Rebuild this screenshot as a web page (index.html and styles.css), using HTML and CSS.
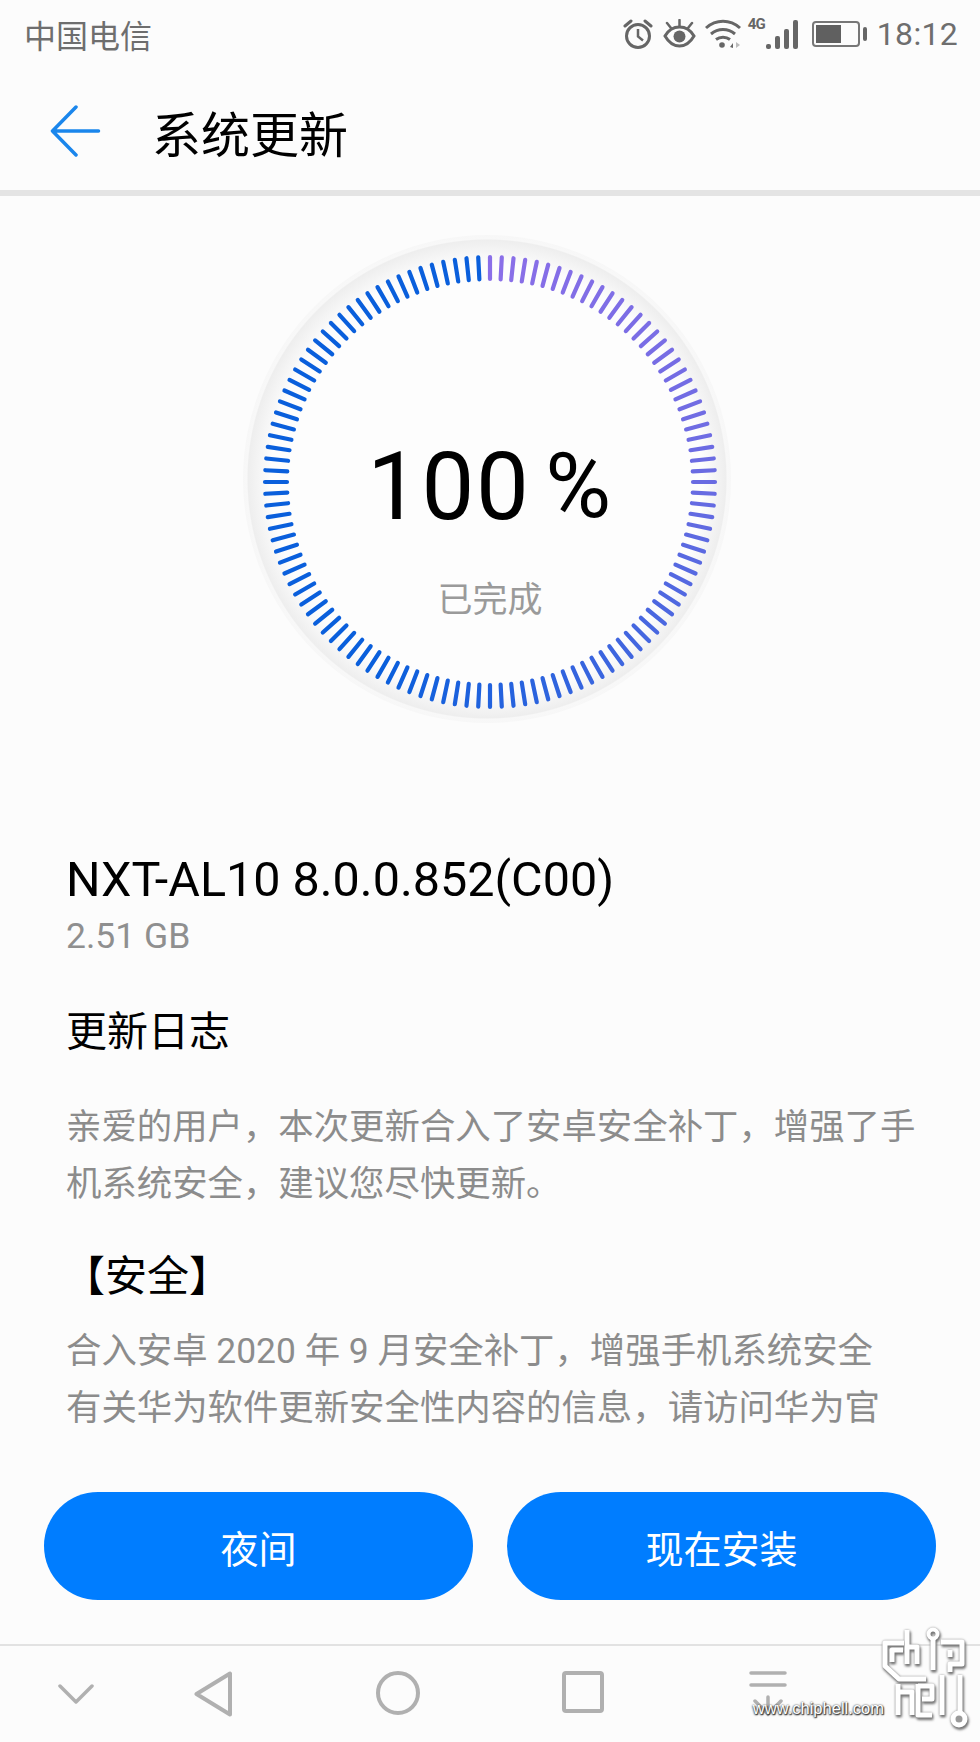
FILE: index.html
```html
<!DOCTYPE html>
<html lang="zh">
<head>
    <meta charset="utf-8">
    <title>系统更新</title>
    <link rel="stylesheet" href="styles.css">
</head>
<body>
    <div class="phone">
        <!-- Status bar -->
        <div class="status-bar">
            <span class="carrier">中国电信</span>
            <div class="status-icons">
                <svg class="ic-alarm" width="32" height="30" viewBox="0 0 32 30" fill="none" stroke="#666" stroke-width="3">
                    <circle cx="16" cy="17" r="11.500"/>
                    <path d="M16 10v7.500l5 4" stroke-width="2.500"/>
                    <path d="M3 7l6-5M29 7l-6-5" stroke-linecap="round"/>
                </svg>
                <svg class="ic-eye" width="33" height="30" viewBox="0 0 33 30" fill="none" stroke="#666" stroke-width="3">
                    <path d="M2 17c4-7 9-9 14.500-9s10.500 2 14.500 9c-4 7-9 10-14.500 10s-10.500-3-14.500-10z"/>
                    <circle cx="16.500" cy="17.500" r="6" fill="#666" stroke="none"/>
                    <path d="M16.500 7V1M8 9L4 4M25 9l4-5" stroke-width="2.500" stroke-linecap="round"/>
                </svg>
                <svg class="ic-wifi" width="36" height="30" viewBox="0 0 36 30" fill="none" stroke="#666" stroke-width="3">
                    <path d="M1 9c10-9 24-9 34 0M6 15c7-6 17-6 24 0M11 20.500c4-3 10-3 14 0"/>
                    <circle cx="17" cy="26" r="2.800" fill="#666" stroke="none"/>
                    <path d="M25 28l3-4v5z" fill="#666" stroke="none"/>
                    <path d="M31 23l4 3-4 3z" fill="#bbb" stroke="none"/>
                </svg>
                <div class="signal">
                    <span class="net">4G</span>
                    <div class="bars">
                        <i class="b1"></i><i class="b2"></i><i class="b3"></i><i class="b4"></i>
                    </div>
                </div>
                <div class="battery">
                    <div class="battery-body"><div class="battery-fill"></div></div>
                    <div class="battery-nub"></div>
                </div>
                <span class="time">18:12</span>
            </div>
        </div>

        <!-- Title bar -->
        <div class="title-bar">
            <svg class="back" width="52" height="52" viewBox="0 0 52 52" fill="none" stroke="#1a86ec" stroke-width="3.500" stroke-linecap="round" stroke-linejoin="round">
                <path d="M26 2L2.500 26 26 50M3 26h45.500"/>
            </svg>
            <h1>系统更新</h1>
        </div>

        <!-- Progress ring -->
        <div class="gauge-wrap">
            <div class="gauge">
                <svg id="ring" class="ring" width="500" height="500" viewBox="0 0 500 500">
                    <defs>
                        <radialGradient id="ringBg" gradientUnits="userSpaceOnUse" cx="247" cy="247" r="245">
                            <stop offset="0.88" stop-color="#fdfdfd"/>
                            <stop offset="0.975" stop-color="#eeeeee"/>
                            <stop offset="0.98" stop-color="#f8f8f8"/>
                            <stop offset="1" stop-color="#f7f7f7"/>
                        </radialGradient>
                    </defs>
                    <circle cx="247" cy="247" r="244" fill="url(#ringBg)"/>
                </svg>
                <div class="gauge-text">
                    <div class="percent">100<span class="pct-sign">%</span></div>
                    <div class="done">已完成</div>
                </div>
            </div>
        </div>

        <!-- Update info -->
        <div class="info">
            <div class="version">NXT-AL10 8.0.0.852(C00)</div>
            <div class="size">2.51 GB</div>
            <h2 class="log-title">更新日志</h2>
            <p class="log-text">亲爱的用户，本次更新合入了安卓安全补丁，增强了手机系统安全，建议您尽快更新。</p>
            <h2 class="sec-title">【安全】</h2>
            <p class="log-text sec-text">合入安卓 2020 年 9 月安全补丁，增强手机系统安全<br>有关华为软件更新安全性内容的信息，请访问华为官</p>
        </div>

        <!-- Buttons -->
        <div class="actions">
            <button class="btn">夜间</button>
            <button class="btn">现在安装</button>
        </div>

        <!-- Navigation bar -->
        <div class="nav-bar">
            <svg class="nav-hide" width="36" height="20" viewBox="0 0 36 20" fill="none" stroke="#b0b0b0" stroke-width="3.500" stroke-linecap="round" stroke-linejoin="round">
                <path d="M2 2l16 16L34 2"/>
            </svg>
            <div class="nav-keys">
                <div class="nav-key">
                    <svg width="38" height="46" viewBox="0 0 38 46" fill="none" stroke="#b0b0b0" stroke-width="4" stroke-linejoin="round">
                        <path d="M36 2.500v41L2.500 23z"/>
                    </svg>
                </div>
                <div class="nav-key">
                    <svg width="44" height="44" viewBox="0 0 44 44" fill="none" stroke="#b0b0b0" stroke-width="4">
                        <circle cx="22" cy="22" r="20"/>
                    </svg>
                </div>
                <div class="nav-key">
                    <svg width="42" height="42" viewBox="0 0 42 42" fill="none" stroke="#b0b0b0" stroke-width="4" stroke-linejoin="round">
                        <rect x="2" y="2" width="38" height="38" rx="2"/>
                    </svg>
                </div>
                <div class="nav-key">
                    <svg width="38" height="46" viewBox="0 0 38 46" fill="none" stroke="#b0b0b0" stroke-linecap="round">
                        <path d="M2 2h34M2 14h34M19 26v16M6 30l13 13 13-13" stroke-width="3.500"/>
                    </svg>
                </div>
            </div>
        </div>

        <!-- Forum watermark -->
        <div class="watermark">
            <span class="wm-text">www.chiphell.com</span>
            <svg class="wm-logo" width="110" height="122" viewBox="0 0 110 122" fill="none" stroke="#fff" stroke-width="5" stroke-linejoin="round">
                <path d="M34 23H15V46L29 59H56"/>
                <path d="M22 42V30H33"/>
                <path d="M37 10V44M37 27H47V44"/>
                <circle cx="63" cy="14" r="4.500" stroke-width="4"/>
                <path d="M63 18V50"/>
                <path d="M71 22H92V44H80V52M80 30V37"/>
                <path d="M28 64V95M28 72H42V95"/>
                <path d="M48 64V95H62M48 66H62V79H52"/>
                <path d="M72 55V95M90 55V92"/>
                <circle cx="89" cy="99" r="6" stroke-width="5" fill="#999"/>
            </svg>
        </div>
    </div>
    <script src="script.js"></script>
</body>
</html>
```

FILE: styles.css
```css
* { box-sizing: border-box; }
html, body { margin: 0; padding: 0; }
body {
    font-family: Roboto, "Noto Sans CJK SC", sans-serif;
    background-color: #fcfcfc;
    color: #000;
}
.phone {
    position: relative;
    width: 980px;
    height: 1742px;
    overflow: hidden;
    display: flex;
    flex-direction: column;
}

/* status bar */
.status-bar {
    height: 70px;
    padding: 0 22px 2px 24px;
    display: flex;
    align-items: center;
    justify-content: space-between;
    color: #6e6e6e;
}
.carrier { font-size: 32px; }
.status-icons { display: flex; align-items: center; }
.ic-alarm { margin-right: 9px; }
.ic-eye { margin-right: 9px; }
.ic-wifi { margin-right: 7px; }
.signal { position: relative; width: 50px; height: 30px; margin-right: 14px; }
.net {
    position: absolute;
    left: 0;
    top: -4px;
    font-size: 15px;
    font-weight: 700;
    letter-spacing: -1px;
    color: #666;
}
.bars {
    position: absolute;
    right: 0;
    bottom: 0;
    display: flex;
    align-items: flex-end;
    gap: 4px;
}
.bars i { display: block; width: 5px; background-color: #666; border-radius: 2px; }
.bars .b1 { height: 5px; }
.bars .b2 { height: 13px; }
.bars .b3 { height: 20px; }
.bars .b4 { height: 29px; }
.battery { display: flex; align-items: center; margin-right: 10px; }
.battery-body {
    width: 48px;
    height: 26px;
    border: 2px solid #777;
    border-radius: 4px;
    padding: 2px;
}
.battery-fill { width: 25px; height: 100%; background-color: #606060; }
.battery-nub { width: 4px; height: 14px; margin-left: 3px; background-color: #666; border-radius: 2px; }
.time { font-size: 32px; letter-spacing: 0.3px; }

/* title bar */
.title-bar {
    height: 126px;
    padding: 2px 0 0 50px;
    display: flex;
    align-items: center;
    border-bottom: 6px solid #e4e4e4;
}
.title-bar h1 {
    margin: 0 0 0 50px;
    font-size: 49px;
    font-weight: 400;
}

/* ring */
.gauge-wrap { display: flex; justify-content: center; margin-top: 36px; }
.gauge { display: grid; width: 500px; height: 500px; }
.ring, .gauge-text { grid-area: 1 / 1; }
.gauge-text { display: flex; flex-direction: column; align-items: center; }
.percent {
    margin-top: 195px;
    font-size: 94px;
    letter-spacing: 1.5px;
    line-height: 120px;
    display: flex;
    align-items: center;
}
.pct-sign { font-size: 90px; margin-left: 15px; }
.done { margin-top: 29px; font-size: 35px; line-height: 50px; color: #9a9a9a; }

/* text block */
.info { padding: 0 40px 0 66px; height: 760px; }
.version { margin-top: 120px; font-size: 48.5px; line-height: 56px; }
.size { margin-top: 6px; font-size: 35.5px; line-height: 44px; color: #8f8f8f; }
.log-title { margin: 46px 0 0; font-size: 41px; line-height: 56px; font-weight: 400; }
.log-text { margin: 0; font-size: 35.4px; line-height: 57px; color: #8c8c8c; }
.info .log-text { margin-top: 39px; }
.sec-title { margin: 36px 0 0 -3px; font-size: 42px; line-height: 56px; font-weight: 400; }
.info .sec-text { margin-top: 18px; }

/* buttons */
.actions {
    position: absolute;
    left: 44px;
    right: 44px;
    top: 1492px;
    display: flex;
    gap: 34px;
}
.btn {
    flex: 1;
    height: 108px;
    border: none;
    border-radius: 54px;
    background-color: #007dff;
    color: #fff;
    font-family: inherit;
    font-size: 38px;
}

/* bottom nav */
.nav-bar {
    position: absolute;
    left: 0;
    right: 0;
    top: 1644px;
    height: 98px;
    padding-left: 58px;
    display: flex;
    align-items: center;
    border-top: 2px solid #e2e2e2;
}
.nav-hide { margin-right: 26px; }
.nav-keys { display: flex; }
.nav-key { width: 185px; display: flex; justify-content: center; }

/* watermark */
.watermark {
    position: absolute;
    right: 0;
    bottom: 0;
    display: flex;
    align-items: flex-end;
}
.wm-text {
    position: relative;
    z-index: 1;
    font-family: "Liberation Sans", sans-serif;
    font-size: 16.5px;
    line-height: 20px;
    color: #fff;
    margin: 0 -14px 24px 0;
    text-shadow: 0 1px 2px #333, 0 0 2px #444, 1px 1px 1px #444;
}
.wm-logo { filter: drop-shadow(1px 2px 1px #777) drop-shadow(0 0 1px #999); }
```

FILE: script.js
```js
// draws the 120 ticks of the progress ring
const ring = document.getElementById('ring');

function mix(a, b, t) {
    return a.map((v, i) => Math.round(v + (b[i] - v) * t));
}

function tickColor(deg) {
    const purple = [139, 111, 232];
    const indigo = [105, 107, 226];
    const blue = [10, 95, 220];
    if (deg <= 90) return mix(purple, indigo, deg / 90);
    return mix(indigo, blue, Math.min((deg - 90) / 120, 1));
}

for (let i = 0; i < 120; i++) {
    const deg = i * 3;
    const line = document.createElementNS('http://www.w3.org/2000/svg', 'line');
    line.setAttribute('x1', 250);
    line.setAttribute('x2', 250);
    line.setAttribute('y1', 25);
    line.setAttribute('y2', 47);
    line.setAttribute('stroke', 'rgb(' + tickColor(deg).join(',') + ')');
    line.setAttribute('stroke-width', 4.2);
    line.setAttribute('stroke-linecap', 'round');
    line.setAttribute('transform', 'rotate(' + deg + ' 250 250)');
    ring.appendChild(line);
}
```
